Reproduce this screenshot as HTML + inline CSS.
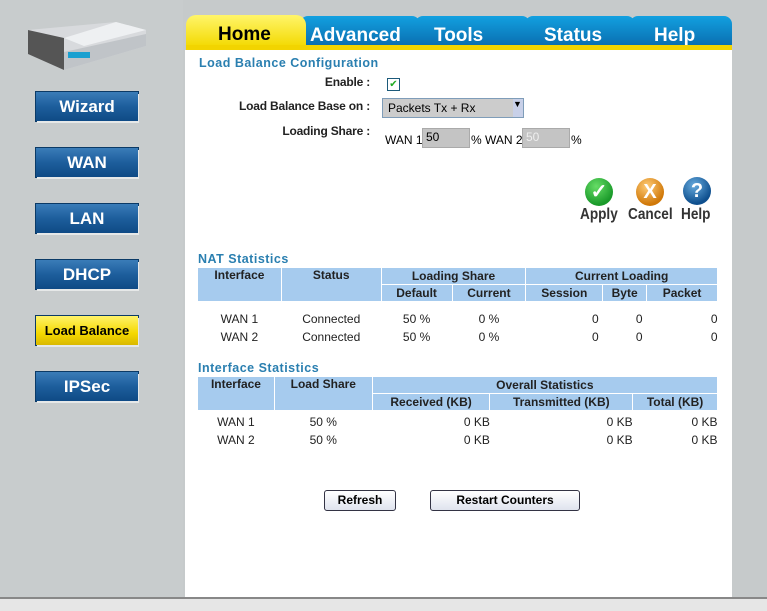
<!DOCTYPE html>
<html><head><style>
body{margin:0;width:767px;height:609px;background:#c6cacb;position:relative;overflow:hidden;font-family:"Liberation Sans",Arial,sans-serif;font-size:12px;color:#000}
.a{position:absolute}
.lb{font-weight:bold;color:#222;right:397px;letter-spacing:-.2px}
.nav{position:absolute;left:36px;width:102px;height:29px;background:linear-gradient(#3a7cb8,#1d5e9c 50%,#0f4a85);color:#fff;font-weight:bold;font-size:17px;text-align:center;line-height:29px;box-shadow:1px 2px 0 #e6e8e8, -0px 0 0 1px #0b3a66;letter-spacing:0}
.nav.y{background:linear-gradient(#fff36a,#f5d800 60%,#d9b800);color:#000;font-size:13px}
.tab{position:absolute;top:16px;height:30px;color:#fff;font-weight:bold;font-size:19px;line-height:40px;padding-left:0;background:linear-gradient(#12a0e0,#0a6eb0);border-radius:8px 8px 0 0}
.main{position:absolute;left:185px;top:50px;width:547px;height:547px;background:#fff}
.h{position:absolute;color:#2a7fb0;font-weight:bold;font-size:12.5px;letter-spacing:.5px}
table{position:absolute;border-collapse:collapse;font-size:12px}
th{background:#a6cbee;font-weight:bold;border:1px solid #fff;height:16px;padding:0;color:#222}
td{height:18px;padding:0;color:#222}
.r{text-align:right}.c{text-align:center}
.btn{position:absolute;height:19px;border:1px solid #334;border-radius:3px;background:linear-gradient(#fff,#dfe3ee);font-weight:bold;font-size:12px;text-align:center;line-height:19px}
.ic{position:absolute;width:28px;height:28px;border-radius:50%;color:#fff;font-weight:bold;font-size:20px;text-align:center;line-height:28px}
.il{position:absolute;top:206px;font-weight:bold;font-size:16px;color:#333;transform:scaleX(.85);transform-origin:left}
</style></head><body>
<div class="a" style="left:0;top:0;width:183px;height:597px;background:#c8cccd"></div>
<svg class="a" style="left:24px;top:12px" width="124" height="62"><polygon points="4,18 92,10 122,18 122,34 40,58 4,42" fill="#d8dadd"/><polygon points="40,40 122,22 122,34 40,58" fill="#c0c4c8"/><polygon points="4,18 40,26 40,58 4,42" fill="#555"/><polygon points="40,26 92,10 122,18 60,34" fill="#eef0f2"/><rect x="44" y="40" width="22" height="6" fill="#1aa0d0"/></svg>
<div class="nav" style="top:92px">Wizard</div>
<div class="nav" style="top:148px">WAN</div>
<div class="nav" style="top:204px">LAN</div>
<div class="nav" style="top:260px">DHCP</div>
<div class="nav y" style="top:316px">Load Balance</div>
<div class="nav" style="top:372px">IPSec</div>
<div class="tab" style="left:300px;width:120px;"><span style="padding-left:10px">Advanced</span></div>
<div class="tab" style="left:415px;width:115px;"><span style="padding-left:19px">Tools</span></div>
<div class="tab" style="left:525px;width:110px;"><span style="padding-left:19px">Status</span></div>
<div class="tab" style="left:630px;width:102px;"><span style="padding-left:24px">Help</span></div>
<div class="tab" style="left:186px;width:120px;top:15px;height:32px;background:linear-gradient(#fff56a,#f3d900);color:#000;border-radius:10px 10px 0 0;line-height:40px"><span style="padding-left:32px">Home</span></div>
<div class="a" style="left:186px;top:45px;width:546px;height:5px;background:#f2d400;border-bottom:1px solid #c9a800"></div>
<div class="main"></div>
<div class="h" style="left:199px;top:56px">Load Balance Configuration</div>
<div class="a lb" style="top:75px">Enable :</div>
<div class="a" style="left:387px;top:78px;width:11px;height:11px;border:1px solid #1c5a7a;background:#fff;color:#2a2;font-size:10px;line-height:11px;text-align:center">✔</div>
<div class="a lb" style="top:99px">Load Balance Base on :</div>
<div class="a" style="left:382px;top:98px;width:140px;height:18px;border:1px solid #7f9db9;background:#ccc"><span style="position:absolute;left:5px;top:2px">Packets Tx + Rx</span><span style="position:absolute;right:0;top:0;width:10px;height:18px;background:#c8d0e8;font-size:9px">▼</span></div>
<div class="a lb" style="top:124px">Loading Share :</div>
<div class="a" style="left:385px;top:133px">WAN 1</div>
<div class="a" style="left:422px;top:128px;width:46px;height:18px;border:1px solid #aaa;background:#c4c4c4"><span style="position:absolute;left:3px;top:1px">50</span></div>
<div class="a" style="left:471px;top:133px">% WAN 2</div>
<div class="a" style="left:522px;top:128px;width:46px;height:18px;border:1px solid #aaa;background:#c4c4c4;color:#eee"><span style="position:absolute;left:3px;top:1px">50</span></div>
<div class="a" style="left:571px;top:133px">%</div>
<div class="ic" style="left:585px;top:178px;background:radial-gradient(circle at 40% 30%,#6d6,#1a9a2a 70%)">✓</div>
<div class="ic" style="left:636px;top:178px;background:radial-gradient(circle at 40% 30%,#fc7,#d07808 70%)">X</div>
<div class="ic" style="left:683px;top:177px;background:radial-gradient(circle at 40% 30%,#6ad,#0e4f8e 70%)">?</div>
<div class="il" style="left:580px">Apply</div>
<div class="il" style="left:628px">Cancel</div>
<div class="il" style="left:681px">Help</div>
<div class="h" style="left:198px;top:252px">NAT Statistics</div>
<table style="left:197px;top:267px;width:521px">
<colgroup><col width="84"><col width="100"><col width="71"><col width="74"><col width="77"><col width="44"><col width="71"></colgroup>
<tr><th rowspan="2" style="vertical-align:top">Interface</th><th rowspan="2" style="vertical-align:top">Status</th><th colspan="2">Loading Share</th><th colspan="3">Current Loading</th></tr>
<tr><th>Default</th><th>Current</th><th>Session</th><th>Byte</th><th>Packet</th></tr>
<tr><td class="c" style="padding-top:8px">WAN 1</td><td class="c" style="padding-top:8px">Connected</td><td class="c" style="padding-top:8px">50 %</td><td class="c" style="padding-top:8px">0 %</td><td class="r" style="padding:8px 4px 0 0">0</td><td class="r" style="padding:8px 4px 0 0">0</td><td class="r" style="padding-top:8px">0</td></tr>
<tr><td class="c">WAN 2</td><td class="c">Connected</td><td class="c">50 %</td><td class="c">0 %</td><td class="r" style="padding-right:4px">0</td><td class="r" style="padding-right:4px">0</td><td class="r">0</td></tr>
</table>
<div class="h" style="left:198px;top:361px">Interface Statistics</div>
<table style="left:197px;top:376px;width:521px">
<colgroup><col width="77"><col width="98"><col width="118"><col width="143"><col width="85"></colgroup>
<tr><th rowspan="2" style="vertical-align:top">Interface</th><th rowspan="2" style="vertical-align:top">Load Share</th><th colspan="3">Overall Statistics</th></tr>
<tr><th>Received (KB)</th><th>Transmitted (KB)</th><th>Total (KB)</th></tr>
<tr><td class="c" style="padding-top:2px">WAN 1</td><td class="c" style="padding-top:2px">50 %</td><td class="r" style="padding-top:2px">0 KB</td><td class="r" style="padding-top:2px">0 KB</td><td class="r" style="padding-top:2px">0 KB</td></tr>
<tr><td class="c">WAN 2</td><td class="c">50 %</td><td class="r">0 KB</td><td class="r">0 KB</td><td class="r">0 KB</td></tr>
</table>
<div class="btn" style="left:324px;top:490px;width:70px">Refresh</div>
<div class="btn" style="left:430px;top:490px;width:148px">Restart Counters</div>
<div class="a" style="left:0;top:597px;width:767px;height:12px;background:#e6e6e6;border-top:2px solid #888"></div>
</body></html>
